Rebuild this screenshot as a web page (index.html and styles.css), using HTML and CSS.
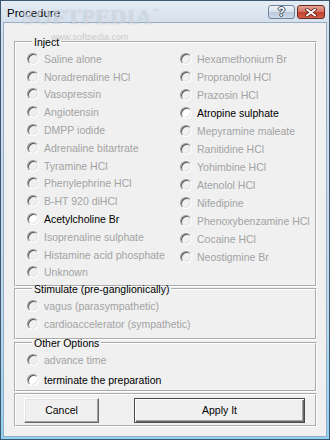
FILE: index.html
```html
<!DOCTYPE html>
<html lang="en">
<head>
    <meta charset="UTF-8">
    <meta name="viewport" content="width=device-width, initial-scale=1.0">
    <title>Procedure</title>
    <link rel="stylesheet" href="styles.css">
</head>
<body>
    <div class="window">
        <div class="titlebar">
            <span class="title">Procedure</span>
            <span class="tb-btn help">?</span>
            <span class="tb-btn close">
                <svg width="12" height="9" viewBox="0 0 12 9">
                    <path d="M2 1.5 L10 7.5 M10 1.5 L2 7.5" stroke="#5a1d14" stroke-width="3.4" stroke-linecap="square"/>
                    <path d="M2 1.5 L10 7.5 M10 1.5 L2 7.5" stroke="#fff" stroke-width="1.8" stroke-linecap="square"/>
                </svg>
            </span>
        </div>

        <div class="client">
            <fieldset class="group inject">
                <legend>Inject</legend>
                <div class="cols">
                    <div class="col left">
                        <label class="opt"><span class="radio"></span>Saline alone</label>
                        <label class="opt"><span class="radio"></span>Noradrenaline HCl</label>
                        <label class="opt"><span class="radio"></span>Vasopressin</label>
                        <label class="opt"><span class="radio"></span>Angiotensin</label>
                        <label class="opt"><span class="radio"></span>DMPP iodide</label>
                        <label class="opt"><span class="radio"></span>Adrenaline bitartrate</label>
                        <label class="opt"><span class="radio"></span>Tyramine HCl</label>
                        <label class="opt"><span class="radio"></span>Phenylephrine HCl</label>
                        <label class="opt"><span class="radio"></span>B-HT 920 diHCl</label>
                        <label class="opt on"><span class="radio"></span>Acetylcholine Br</label>
                        <label class="opt"><span class="radio"></span>Isoprenaline sulphate</label>
                        <label class="opt"><span class="radio"></span>Histamine acid phosphate</label>
                        <label class="opt"><span class="radio"></span>Unknown</label>
                    </div>
                    <div class="col right">
                        <label class="opt"><span class="radio"></span>Hexamethonium Br</label>
                        <label class="opt"><span class="radio"></span>Propranolol HCl</label>
                        <label class="opt"><span class="radio"></span>Prazosin HCl</label>
                        <label class="opt on"><span class="radio"></span>Atropine sulphate</label>
                        <label class="opt"><span class="radio"></span>Mepyramine maleate</label>
                        <label class="opt"><span class="radio"></span>Ranitidine HCl</label>
                        <label class="opt"><span class="radio"></span>Yohimbine HCl</label>
                        <label class="opt"><span class="radio"></span>Atenolol HCl</label>
                        <label class="opt"><span class="radio"></span>Nifedipine</label>
                        <label class="opt"><span class="radio"></span>Phenoxybenzamine HCl</label>
                        <label class="opt"><span class="radio"></span>Cocaine HCl</label>
                        <label class="opt"><span class="radio"></span>Neostigmine Br</label>
                    </div>
                </div>
            </fieldset>

            <fieldset class="group stimulate">
                <legend>Stimulate (pre-ganglionically)</legend>
                <label class="opt"><span class="radio"></span>vagus (parasympathetic)</label>
                <label class="opt"><span class="radio"></span>cardioaccelerator (sympathetic)</label>
            </fieldset>

            <fieldset class="group other">
                <legend>Other Options</legend>
                <label class="opt"><span class="radio"></span>advance time</label>
                <label class="opt on"><span class="radio"></span>terminate the preparation</label>
            </fieldset>

            <div class="group buttons">
                <button class="btn cancel">Cancel</button>
                <button class="btn apply">Apply It</button>
            </div>
        </div>

        <span class="mark-logo">SOFTPEDIA<sup>™</sup></span>
        <span class="mark-url">www.softpedia.com</span>
    </div>
</body>
</html>
```

FILE: styles.css
```css
body {
    margin: 0;
    font-family: "Liberation Sans", Arial, sans-serif;
    font-size: 10.5px;
    color: #000;
}
.window {
    position: relative;
    box-sizing: border-box;
    width: 330px;
    height: 440px;
    display: flex;
    flex-direction: column;
    border: 1px solid #3e5670;
    background: linear-gradient(#e2eaf3, #d0dded 8%, #bcd9ef 70%, #8fd3f0);
    padding: 0 2px 2px 2px;
    overflow: hidden;
}
.titlebar {
    height: 21px;
    display: flex;
    align-items: flex-start;
    margin: 0 -2px;
    padding: 0 4px 0 6px;
    background: linear-gradient(#e4ecf4, #d6e1ed);
}
.title {
    margin-right: auto;
    padding-top: 5px;
    font-size: 11.5px;
    line-height: 14px;
}
.tb-btn {
    box-sizing: border-box;
    height: 14px;
    margin-top: 4px;
    border-radius: 3px;
    display: flex;
    align-items: center;
    justify-content: center;
}
.help {
    width: 27px;
    margin-right: 2px;
    border: 1px solid #71849b;
    background: linear-gradient(#f1f5fa, #d5e0ec 50%, #bccbdd 51%, #cbd9e8);
    color: #fff;
    font-weight: bold;
    font-size: 12px;
    line-height: 12px;
    text-shadow: 1px 0 0 #3c4c60, -1px 0 0 #3c4c60, 0 1px 0 #3c4c60, 0 -1px 0 #3c4c60;
}
.close {
    width: 28px;
    border: 1px solid #6b2b20;
    background: linear-gradient(#e3a396, #d3705f 50%, #c2412c 51%, #d0604a);
}
.client {
    flex: 1;
    border: 1px solid #98adc4;
    background: #f0f0f0;
    padding: 13px 9px 0 10px;
}
.group {
    margin: 0;
    padding: 0;
    min-inline-size: 0;
    border: 2px groove #fff;
}
.group legend {
    margin-left: 5px;
    padding: 0 2px;
    line-height: 12px;
}
.opt {
    display: flex;
    align-items: center;
    gap: 5px;
    color: #a3a3a3;
    white-space: nowrap;
}
.opt.on {
    color: #000;
}
.radio {
    box-sizing: border-box;
    flex: none;
    width: 12px;
    height: 12px;
    border-radius: 50%;
    border: 1px solid;
    border-color: #9a9a9a #fff #fff #9a9a9a;
    box-shadow: inset 1px 1px 0 #555, inset -1px -1px 0 #e3e3e3;
    background: #f0f0f0;
}
.on .radio {
    background: #fff;
}

/* Inject */
.inject {
    padding: 2px 0 4px 11px;
}
.cols {
    display: flex;
}
.col.left {
    width: 153px;
}
.col.left .opt {
    height: 17.8px;
}
.col.right .opt {
    height: 18px;
}

.stimulate {
    margin-top: -4px;
    padding: 2px 0 5px 11px;
}
.stimulate .opt {
    height: 17.6px;
}

.other {
    margin-top: -3px;
    padding: 2px 0 1px 11px;
}
.other .opt {
    height: 18px;
}
.other .opt + .opt {
    margin-top: 2px;
}

.buttons {
    margin-top: 1px;
    display: flex;
    padding: 3px 0 2px 8px;
}
.btn {
    box-sizing: border-box;
    height: 25px;
    font-family: inherit;
    font-size: 10.5px;
    color: #000;
    background: #f0f0f0;
    border-radius: 0;
    padding: 0;
}
.cancel {
    width: 75px;
    border: 1px solid;
    border-color: #fff #696969 #696969 #fff;
    box-shadow: inset -1px -1px 0 #a0a0a0, inset 1px 1px 0 #e3e3e3;
}
.apply {
    width: 171px;
    margin-left: 35px;
    border: 1px solid #4a4a4a;
    box-shadow: inset 1px 1px 0 #fff, inset -1px -1px 0 #696969, inset -2px -2px 0 #a0a0a0;
}

/* watermark over the picture */
.mark-logo {
    position: absolute;
    left: 21px;
    top: 0;
    font-family: "Liberation Serif", serif;
    font-weight: bold;
    font-size: 22px;
    line-height: 22px;
    letter-spacing: 0.5px;
    color: rgba(255, 255, 255, 0.45);
    text-shadow: 0 0 1px rgba(120, 140, 165, 0.5);
    pointer-events: none;
}
.mark-logo sup {
    font-size: 7px;
    font-family: "Liberation Sans", sans-serif;
    vertical-align: 10px;
}
.mark-url {
    position: absolute;
    left: 50px;
    top: 31px;
    font-size: 9px;
    color: rgba(170, 170, 170, 0.55);
    pointer-events: none;
}
```
